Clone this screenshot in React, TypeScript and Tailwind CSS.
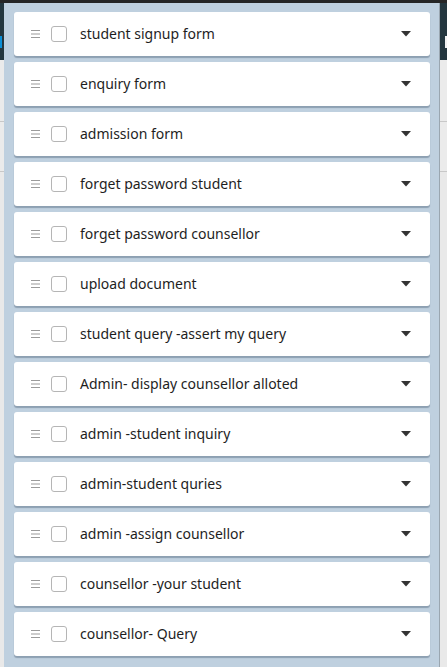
import React from "react";

const items = [
  "student signup form",
  "enquiry form",
  "admission form",
  "forget password student",
  "forget password counsellor",
  "upload document",
  "student query -assert my query",
  "Admin- display counsellor alloted",
  "admin -student inquiry",
  "admin-student quries",
  "admin -assign counsellor",
  "counsellor -your student",
  "counsellor- Query",
];

function Grip() {
  return (
    <svg width="9" height="8" viewBox="0 0 9 8" className="shrink-0">
      <rect x="0" y="0" width="9" height="1" fill="#9a9a9a" />
      <rect x="0" y="3.5" width="9" height="1" fill="#9a9a9a" />
      <rect x="0" y="7" width="9" height="1" fill="#9a9a9a" />
    </svg>
  );
}

function Caret() {
  return (
    <svg width="10" height="6" viewBox="0 0 10 6" className="shrink-0">
      <path d="M0 0 L10 0 L5 5.5 Z" fill="#333333" />
    </svg>
  );
}

export default function App() {
  return (
    <div
      className="relative w-[447px] h-[667px] overflow-hidden bg-[#e9e9e9]"
      style={{ fontFamily: '"Noto Sans", "Open Sans", sans-serif' }}
    >
      {/* backdrop */}
      <div className="h-[3px] bg-[#262626]" />
      <div className="relative h-[57px] bg-[#24373f]">
        <div className="absolute left-0 top-[33px] w-[2px] h-[12px] bg-[#0b8fd6]" />
        <div className="absolute right-0 top-[33px] w-[2px] h-[12px] bg-[#f2f2f2]" />
      </div>
      <div className="h-[62px] border-b border-[#c8c8c8] bg-[#ebebeb]" />
      <div className="h-[50px] border-b border-[#c8c8c8] bg-[#ebebeb]" />

      {/* overlay panel */}
      <div className="absolute left-[4px] top-[3px] w-[436px] bottom-0 bg-[#bfd0df] border-r border-[#9aa6b0]">
        <div className="flex flex-col gap-[6px] pl-[10px] pr-[9px] pt-[9px]">
          {items.map((t) => (
            <div
              key={t}
              className="h-[44px] flex items-center bg-white rounded-[3px] shadow-[0_2px_1px_rgba(100,120,140,0.55)] pl-[17px] pr-[19px]"
            >
              <Grip />
              <div className="ml-[11px] w-[16px] h-[16px] rounded-[3px] border border-[#b5b5b5] bg-white shrink-0" />
              <span className="ml-[13px] flex-1 text-[14px] text-[#1e1e1e] leading-none">{t}</span>
              <Caret />
            </div>
          ))}
        </div>
      </div>
    </div>
  );
}
